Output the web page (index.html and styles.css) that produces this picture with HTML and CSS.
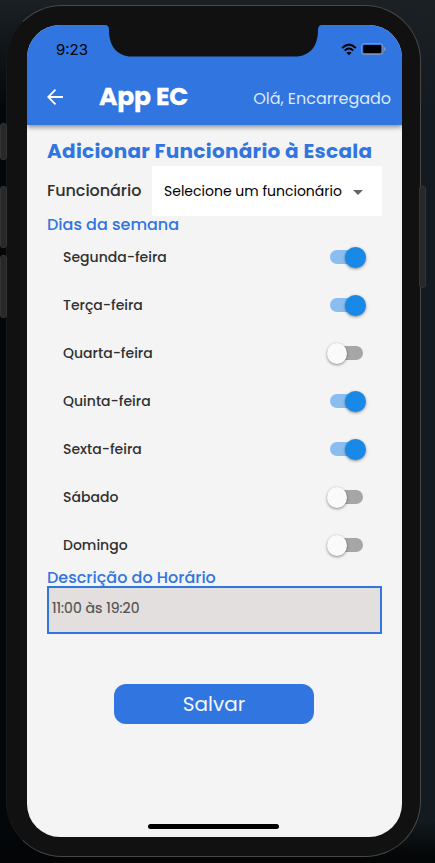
FILE: index.html
```html
<!DOCTYPE html>
<html lang="pt">
<head>
<meta charset="utf-8">
<title>App EC</title>
<link rel="stylesheet" href="styles.css">
</head>
<body>
<div class="phone">
  <i class="side mute"></i><i class="side up"></i><i class="side down"></i><i class="side power"></i>
  <div class="screen">
    <svg class="notch" width="217" height="32" viewBox="0 0 217 32"><path d="M0 0H217Q213 0 213 5C213 21 205 31.500 190 31.500H27C12 31.500 4 21 4 5Q4 0 0 0Z" fill="#111"/></svg>
    <header class="top">
      <div class="status">
        <span class="time">9:23</span>
        <svg class="wifi" width="16" height="13" viewBox="0 0 16 13" fill="none" stroke="#000" stroke-width="2"><path d="M1.200 5Q8 -1.700 14.800 5M3.700 7.600Q8 3.500 12.300 7.600"/><path d="M8 12.300L5.400 9.700Q8 7.600 10.600 9.700Z" fill="#000" stroke="none"/></svg>
        <svg class="battery" width="25" height="12" viewBox="0 0 25 12"><rect x=".6" y=".6" width="21.300" height="10.800" rx="2.500" fill="none" stroke="#8498b8"/><rect x="2.200" y="2" width="18" height="8" rx="1" fill="#000"/><path d="M23 4Q24.800 4.500 24.800 6T23 8Z" fill="#8498b8"/></svg>
      </div>
      <div class="bar">
        <svg class="back" width="16" height="16" viewBox="0 0 16 16" fill="none" stroke="#fff" stroke-width="1.800"><path d="M16 8H1.500M8.500 .7L1.200 8L8.500 15.300"/></svg>
        <h1>App EC</h1>
        <span class="hello">Olá, Encarregado</span>
      </div>
    </header>
    <main>
      <h2>Adicionar Funcionário à Escala</h2>
      <div class="field">
        <span class="label">Funcionário</span>
        <div class="select"><span>Selecione um funcionário</span><i class="caret"></i></div>
      </div>
      <h3>Dias da semana</h3>
      <ul>
        <li><span>Segunda-feira</span><i class="switch on"></i></li>
        <li><span>Terça-feira</span><i class="switch on"></i></li>
        <li><span>Quarta-feira</span><i class="switch"></i></li>
        <li><span>Quinta-feira</span><i class="switch on"></i></li>
        <li><span>Sexta-feira</span><i class="switch on"></i></li>
        <li><span>Sábado</span><i class="switch"></i></li>
        <li><span>Domingo</span><i class="switch"></i></li>
      </ul>
      <h3>Descrição do Horário</h3>
      <div class="input"><span>11:00 às 19:20</span></div>
      <button>Salvar</button>
    </main>
    <i class="home"></i>
  </div>
</div>
</body>
</html>
```
FILE: styles.css
```css
* { box-sizing: border-box; }
body {
  margin: 0; width: 435px; height: 863px; overflow: hidden; padding: 5px 0 0 6px;
  background: linear-gradient(#1b2024 0, #1b202400 110px), linear-gradient(transparent 820px, #030506 858px), linear-gradient(90deg, #03070a 0, #03070a 80px, #131b20 425px);
  font-family: Poppins, Inter, sans-serif; color: #303030; white-space: nowrap;
}
h1, h2, h3, ul { margin: 0; padding: 0; list-style: none; }
.phone {
  position: relative; width: 415px; height: 852px; padding: 19px 18px 18px 20px;
  border: 1px solid #484848; border-left-color: #181818; border-radius: 56px; background: #111;
}
.side { position: absolute; width: 7px; background: #282828; border: 1px solid #343434; border-radius: 3px; }
.mute { left: -7px; top: 117px; height: 37px; }
.up { left: -7px; top: 180px; height: 62px; }
.down { left: -7px; top: 249px; height: 63px; }
.power { right: -6px; top: 180px; height: 102px; }
.screen {
  position: relative; width: 375px; height: 812px; border-radius: 33px; overflow: hidden;
  background: #f4f4f4; display: flex; flex-direction: column;
}
.notch { position: absolute; left: 78px; top: 0; z-index: 2; }
.top { height: 100px; background: #3075e0; box-shadow: 0 2px 5px rgba(0,0,0,.45); flex: none; }
.status { height: 44px; display: flex; align-items: center; padding: 4px 16px 0 29px; color: #000; }
.time { font: 15px Inter, sans-serif; margin-top: 1px; }
.wifi { margin-left: auto; }
.battery { margin-left: 4px; }
.bar { height: 56px; display: flex; align-items: center; padding: 0 11px 0 20px; color: #fff; }
h1 { margin-left: 36px; font-size: 25px; line-height: 30px; font-weight: 700; letter-spacing: -.2px; -webkit-text-stroke: .3px; }
.hello { margin-left: auto; padding-top: 2px; font-size: 16px; color: #dce8fb; letter-spacing: -.03px; }
main { padding: 11px 20px 0; display: flex; flex-direction: column; }
h2 { height: 30px; line-height: 30px; font-size: 20px; font-weight: 700; letter-spacing: .28px; color: #3075e0; }
.field { height: 50px; display: flex; align-items: center; justify-content: space-between; }
.label { font-size: 16px; font-weight: 500; padding-bottom: 1px; letter-spacing: -.05px; }
.select { width: 230px; height: 50px; padding: 0 19px 0 12px; background: #fff; color: #000; font-size: 14px; display: flex; align-items: center; justify-content: space-between; }
.caret { border: 5px solid transparent; border-top-color: #666; border-bottom: 0; margin-top: 2px; }
h3 { height: 17px; line-height: 17px; font-size: 16px; font-weight: 500; color: #3075e0; }
li { height: 48px; padding: 0 16px; display: flex; justify-content: space-between; align-items: center; font-size: 14px; font-weight: 500; }
.switch { width: 34px; height: 14px; border-radius: 7px; background: #a6a6a6; display: flex; align-items: center; margin-right: 3px; }
.switch::before { content: ""; flex: none; width: 20px; height: 21px; margin-left: -2px; border-radius: 50%; background: #fafafa; box-shadow: 0 1px 3px rgba(0,0,0,.45); }
.switch.on { background: #8bbef0; margin-right: 2px; }
.switch.on::before { width: 21px; margin-left: 15px; background: #1989e8; }
.input { height: 48px; padding: 0 3px; border: 2px solid #3075e0; background: #e3dfde; font-size: 14px; line-height: 40px; color: #505050; -webkit-text-stroke: .2px; letter-spacing: .04px; }
button { width: 200px; height: 40px; margin: 50px 0 0 67px; padding: 0; border: 0; border-radius: 12px; background: #3075e0; color: #f3f7ff; font: 20px Poppins, Inter, sans-serif; }
.home { position: absolute; left: 121px; bottom: 8px; width: 131px; height: 5px; border-radius: 3px; background: #000; }
```
